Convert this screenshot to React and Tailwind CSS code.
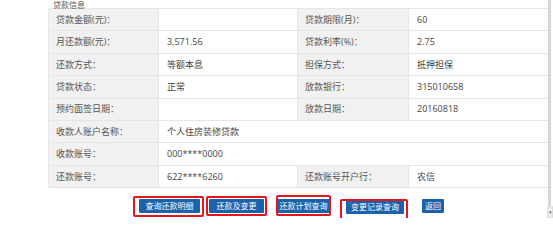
import React from "react";

const font = { fontFamily: '"Open Sans","Noto Sans CJK SC",sans-serif' };

function L({ children }) {
  return (
    <div className="bg-[#f1f1f1] border-b border-r border-[#e6e6e6] flex items-center pl-[7px] text-[#555]">
      {children}
    </div>
  );
}
function V({ children, span }) {
  return (
    <div
      className={`bg-white border-b border-r border-[#e6e6e6] flex items-center pl-[8px] text-[#444] ${span ? "col-span-3" : ""}`}
    >
      {children}
    </div>
  );
}

function Btn({ label, w, box }) {
  return (
    <div className="relative">
      <div
        className="h-[14px] bg-[#1b62ad] text-white text-[8px] leading-[14px] flex items-center justify-center rounded-[1px]"
        style={{ width: w }}
      >
        {label}
      </div>
      {box && (
        <div
          className="absolute z-10 border-2 border-[#e8141c] rounded-[2px]"
          style={box}
        />
      )}
    </div>
  );
}

export default function App() {
  return (
    <div className="relative w-[553px] h-[218px] bg-white overflow-hidden text-[9px]" style={font}>
      <div className="ml-[48px] w-[500px]">
        <div className="h-[9px] flex items-center pl-[5px] text-[#555] border-b border-[#e6e6e6]">
          <span className="text-[8px] leading-[9px]">贷款信息</span>
        </div>
        <div className="grid grid-cols-[110px_139px_111px_140px] auto-rows-[22.375px] border-l border-[#e6e6e6]">
          <L>贷款金额(元)：</L>
          <V></V>
          <L>贷款期限(月)：</L>
          <V>60</V>

          <L>月还款额(元)：</L>
          <V>3,571.56</V>
          <L>贷款利率(%)：</L>
          <V>2.75</V>

          <L>还款方式：</L>
          <V>等额本息</V>
          <L>担保方式：</L>
          <V>抵押担保</V>

          <L>贷款状态：</L>
          <V>正常</V>
          <L>放款银行：</L>
          <V>315010658</V>

          <L>预约面签日期：</L>
          <V></V>
          <L>放款日期：</L>
          <V>20160818</V>

          <L>收款人账户名称：</L>
          <V span>个人住房装修贷款</V>

          <L>收款账号：</L>
          <V span>000****0000</V>

          <L>还款账号：</L>
          <V>622****6260</V>
          <L>还款账号开户行：</L>
          <V>农信</V>
        </div>
        <div className="flex items-start mt-[11px] ml-[91px]">
          <Btn label="查询还款明细" w={61} box={{ left: -6, right: -4, top: -3, bottom: -4 }} />
          <div className="w-[9px]" />
          <Btn label="还款及变更" w={55} box={{ left: -3, right: -3, top: -3, bottom: -3 }} />
          <div className="w-[12px]" />
          <Btn label="还款计划查询" w={55} box={{ left: 0, right: 0, top: -4, bottom: -3 }} />
          <div className="w-[15px]" />
          <div className="mt-[1px]">
            <Btn label="变更记录查询" w={58} box={{ left: -6, right: -4, top: -1, bottom: -8 }} />
          </div>
          <div className="w-[18px]" />
          <Btn label="返回" w={22} />
        </div>
      </div>
      <div className="absolute top-0 left-[548px] w-[3px] h-[206px] bg-[#d6d6d6]" />
      <div className="absolute top-[206px] left-[547px] w-[6px] h-[12px] bg-[#efefef] border border-[#dcdcdc] flex items-center justify-center">
        <span className="text-[5px] leading-none text-[#666]">▾</span>
      </div>
    </div>
  );
}
